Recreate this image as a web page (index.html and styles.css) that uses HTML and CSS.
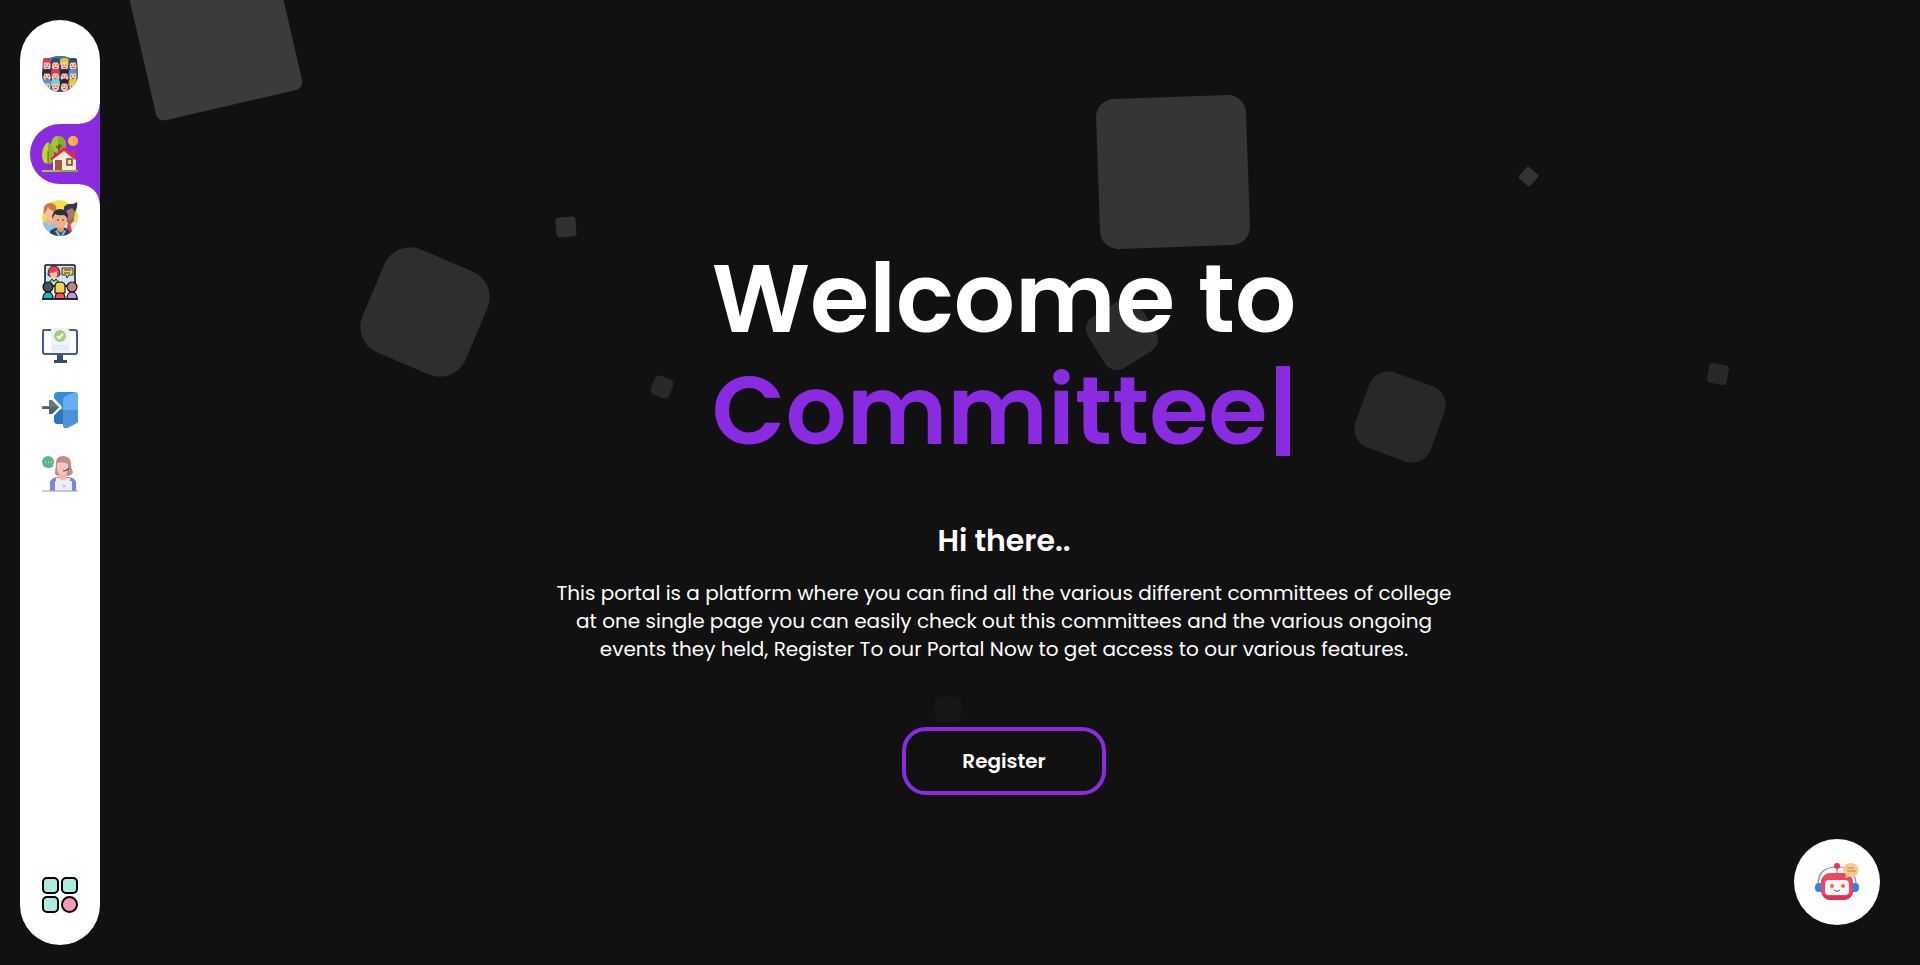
FILE: index.html
```html
<!DOCTYPE html>
<html lang="en">
<head>
<meta charset="utf-8">
<meta name="viewport" content="width=device-width, initial-scale=1">
<title>Committee Portal</title>
<link rel="stylesheet" href="styles.css">
</head>
<body>
<div class="squares" aria-hidden="true">
  <span class="square square-1"></span>
  <span class="square square-2"></span>
  <span class="square square-3"></span>
  <span class="square square-4"></span>
  <span class="square square-5"></span>
  <span class="square square-6"></span>
  <span class="square square-7"></span>
  <span class="square square-8"></span>
  <span class="square square-9"></span>
  <span class="square square-10"></span>
</div>

<nav class="sidebar" aria-label="Main">
  <a class="brand" href="#" aria-label="Committee Portal">
    <svg class="icon" viewBox="0 0 36 36">
      <defs>
        <clipPath id="crowd-clip"><path d="M1 4Q1 2 4 2H8Q18 -2 28 2H32Q35 2 35 4L36 18A18 18 0 0 1 0 18Z"/></clipPath>
        <g id="face">
          <rect x="-1.500" y="8" width="3" height="4" fill="#e59d86"/>
          <rect x="-3.500" y="1" width="7" height="9" rx="3" fill="#f9c4ae"/>
          <path d="M-4.500 5V2a4 4 0 0 1 4-4h1a4 4 0 0 1 4 4v3h-1l-1-2.500h-5l-1 2.500z"/>
          <circle cx="-1.500" cy="5" r=".6" fill="#333"/><circle cx="1.500" cy="5" r=".6" fill="#333"/>
          <path d="M-1.200 7.500h2.400" stroke="#d8384f" stroke-width="1"/>
        </g>
      </defs>
      <g clip-path="url(#crowd-clip)">
        <rect width="36" height="36" fill="#34475e"/>
        <path d="M7 0h22v5H7z" fill="#3f77b8"/>
        <path d="M0 20h36v3H0z" fill="#3a7088"/>
        <use href="#face" x="5" y="4" fill="#e6344f"/><use href="#face" x="13.500" y="4" fill="#324b63"/>
        <use href="#face" x="22.500" y="4" fill="#e9c928"/><use href="#face" x="31" y="4" fill="#344c61"/>
        <use href="#face" x="5" y="15" fill="#292b42"/><use href="#face" x="13.500" y="15" fill="#e6344f"/>
        <use href="#face" x="22.500" y="15" fill="#25283d"/><use href="#face" x="31" y="15" fill="#5b94d2"/>
        <use href="#face" x="5" y="25" fill="#5b94d2"/><use href="#face" x="13.500" y="25" fill="#73cfe0"/>
        <use href="#face" x="22.500" y="25" fill="#25283d"/><use href="#face" x="31" y="25" fill="#e9c928"/>
      </g>
    </svg>
  </a>

  <ul class="menu">
    <li><a class="menu-link active" href="#" aria-label="Home" aria-current="page">
      <svg class="icon" viewBox="0 0 36 36">
        <circle cx="31" cy="5" r="5" fill="#f8b84e"/><path d="M31 0a5 5 0 0 1 0 10z" fill="#f9a743"/>
        <path d="M16 0c5 0 8 4 8 9s-3 8-8 8-7-4-7-8 2-9 7-9z" fill="#a5c63b"/>
        <path d="M16 0c5 0 8 4 8 9s-3 8-8 8z" fill="#86ae2d"/>
        <path d="M17 17V8M17 13l-3-3M17 12l3-3" stroke="#7b4633" stroke-width="1.500" fill="none"/>
        <path d="M6 6c4 3 6 8 6 13s-2 9-6 9-6-4-6-9 2-10 6-13z" fill="#b9d63d"/>
        <path d="M6 6c4 3 6 8 6 13s-2 9-6 9z" fill="#91b62d"/>
        <path d="M6 15v19" stroke="#7b5033"/>
        <path d="M30 14h3v8h-3z" fill="#d92f4b"/>
        <path d="M11 23 22 12l12 11v12H11z" fill="#faebd8"/>
        <path d="m8 23 14-12 13 12-2 1-11-9-12 9z" fill="#e62747"/>
        <path d="M13 24h7v11h-7z" fill="#9c5a42"/>
        <path d="M25 23h5v6h-5z" fill="#f6d7ab" stroke="#76443a" stroke-width="1.500"/>
        <path d="M0 34h12l2 2H0z" fill="#a5c63b"/><path d="M12 34h6v2h-6z" fill="#caa06d"/><path d="M18 34h18v2H18z" fill="#84ac37"/>
      </svg>
    </a></li>
    <li><a class="menu-link" href="#" aria-label="Committees">
      <svg class="icon" viewBox="0 0 36 36">
        <defs><clipPath id="team-clip"><path d="M1 6C8 -2 22 -1 27 4L36 1V18A18 18 0 0 1 0 18Z"/></clipPath></defs>
        <g clip-path="url(#team-clip)">
          <path d="M0 18A18 18 0 0 1 36 18A18 18 0 0 1 0 18Z" fill="#fadd48"/>
          <path d="M0 23q5-4 12-2l5 15H0z" fill="#83c8e8"/>
          <path d="M22 21q8-2 14 2v13H21z" fill="#e4e8ef"/>
          <path d="m26 21 2 2 3 12h-7z" fill="#e94358"/>
          <path d="M5 14h6v9l-3 3-4-4z" fill="#f1b58c"/>
          <ellipse cx="8" cy="13" rx="5" ry="7" fill="#f6c19c"/>
          <path d="M2 14Q0 3 9 3q7 1 5 9-5-1-8-5-1 4-4 7z" fill="#d67242"/>
          <path d="M25 15h7v6l-4 4-4-4z" fill="#956c5c"/>
          <ellipse cx="28" cy="13" rx="5" ry="7" fill="#aa7b69"/>
          <path d="M22 12V7q3-4 9-3l4-2q1 5-2 10l-3-4z" fill="#36384f"/>
          <path d="M8 31q5-4 11-4 6 0 9 5v5H8z" fill="#2d405e"/>
          <path d="M15 24h7v6l-3 3-4-3z" fill="#dd9a72"/>
          <ellipse cx="18" cy="20" rx="7" ry="8" fill="#efb08a"/>
          <path d="M10 19q0-10 8-10 9 0 8 10-2-3-4-4-6 1-9-1z" fill="#292f46"/>
          <path d="m15 30 4 6 3-6 2 1-3 5h-5l-3-5z" fill="#78bfe0"/>
          <circle cx="16" cy="20" r=".7"/><circle cx="21" cy="20" r=".7"/>
        </g>
      </svg>
    </a></li>
    <li><a class="menu-link" href="#" aria-label="Events">
      <svg class="icon" viewBox="0 0 36 36">
        <rect x="3" y="1" width="30" height="21" rx="1" fill="#c7e5f3" stroke="#111" stroke-width="1.500"/>
        <path d="M6 11q0-9 6-9 6 0 6 9l-3 2H9z" fill="#ea3b54" stroke="#111" stroke-width=".8"/>
        <path d="M8 9q4 0 7-2v4q0 4-3 4t-4-4z" fill="#fac5ae"/>
        <path d="m7 18 3-3 2 2 2-2 3 3" fill="#81b969" stroke="#111" stroke-width=".8"/>
        <path d="M20 4h11v7h-4l-2 3-1-3h-4z" fill="#f4cd5d" stroke="#111" stroke-width=".8"/>
        <path d="M22 6h7M22 9h6" stroke="#111" stroke-width=".8"/>
        <path d="M1 35q0-7 5-7t5 7z" fill="#24b3c5" stroke="#111" stroke-width="1.200"/>
        <path d="M13 35q0-7 5-7t5 7z" fill="#ef5250" stroke="#111" stroke-width="1.200"/>
        <path d="M25 35q0-7 5-7t5 7z" fill="#c594df" stroke="#111" stroke-width="1.200"/>
        <circle cx="6" cy="23" r="5" fill="#40565e" stroke="#111" stroke-width="1.200"/>
        <path d="M13 29v-7q0-4 5-4t5 4v7z" fill="#f5ce54" stroke="#111" stroke-width="1.200"/>
        <circle cx="30" cy="23" r="5" fill="#ba8778" stroke="#111" stroke-width="1.200"/>
        <path d="M0 35h36" stroke="#111" stroke-width="1.500"/>
      </svg>
    </a></li>
    <li><a class="menu-link" href="#" aria-label="Registrations">
      <svg class="icon" viewBox="0 0 36 36">
        <path d="M9 2H2q-1 0-1 2v20q0 2 2 2h30q2 0 2-2V4q0-2-2-2h-6" fill="none" stroke="#465c88" stroke-width="2"/>
        <path d="M15 27h6v5h4v3H12v-3h3z" fill="#354b70"/>
        <path d="M9 0h16l3 3v22H9z" fill="#edf2fc"/><path d="M25 0v3h3z" fill="#d6dfef"/>
        <circle cx="18" cy="8" r="6" fill="#a2cf79"/>
        <path d="m15 8 2 2 4-4" fill="none" stroke="#fff" stroke-width="2"/>
        <path d="M10 18h16M10 21h16" stroke="#d6dff3"/>
      </svg>
    </a></li>
    <li><a class="menu-link" href="#" aria-label="Log in">
      <svg class="icon" viewBox="0 0 36 36">
        <path d="M12 4q0-4 4-4h16q4 0 4 4v26l-14 2h-6q-4 0-4-4v-5l8-7-8-8z" fill="#358dd9"/>
        <path d="M12 23l5-5h4v14h-5q-4 0-4-4z" fill="#2b75c2"/>
        <path d="M21 7q0-2 3-3l9-4q3 0 3 4v25q0 2-3 3l-8 4q-4 1-4-3z" fill="#66aef2"/>
        <path d="M21 18h15v11q0 2-3 3l-8 4q-4 1-4-3z" fill="#4a92dc"/>
        <path d="m8 6 3-1 9 10-9 10-3-1z" fill="#fff"/>
        <path d="M0 14h7V8h3l7 7-7 7H7v-5H0z" fill="#5f7c80"/><path d="M0 15h17l-7 7H7v-5H0z" fill="#4d686d"/>
      </svg>
    </a></li>
    <li><a class="menu-link" href="#" aria-label="Support">
      <svg class="icon" viewBox="0 0 36 36">
        <circle cx="6" cy="6" r="6" fill="#58b98c"/><path d="M11 6v5l-6 1z" fill="#58b98c"/>
        <path d="M3 6h1m2 0h1m2 0h1" stroke="#d7fff0" stroke-width="1.200"/>
        <path d="M14 7q0-7 7-7 7 0 8 7 0 6 2 9-1 4-6 4h-8q-5 0-4-5 1-3 1-8z" fill="#bf8d86"/>
        <path d="M8 35V26q1-4 7-5h12q6 1 7 5v9z" fill="#7489d2"/>
        <path d="M17 18h8v4l-4 4-5-4z" fill="#efb6ac"/>
        <path d="M14 22h3q4 4 8 0h3v6H14z" fill="#fae3e3"/>
        <path d="M15 7q6-2 11 1v5q-1 6-5 6-6 0-6-7z" fill="#f5c3bb"/>
        <path d="M21 15q4 0 6-3" stroke="#4d4554" stroke-width="1.200" fill="none"/>
        <rect x="13" y="25" width="17" height="10" rx="1" fill="#eceef8"/>
        <circle cx="22" cy="30" r="1.500" fill="#bdc1da"/>
        <path d="M0 35h36" stroke="#989cac"/>
      </svg>
    </a></li>
  </ul>

  <button class="apps" type="button" aria-label="More">
    <svg class="icon" viewBox="0 0 36 36">
      <g fill="#acebe0" stroke="#000" stroke-width="2">
        <rect x="1" y="1" width="15" height="15" rx="4"/><rect x="20" y="1" width="15" height="15" rx="4"/>
        <rect x="1" y="20" width="15" height="15" rx="4"/><circle cx="27.500" cy="27.500" r="7.500" fill="#fa9ab7"/>
      </g>
    </svg>
  </button>
</nav>

<main class="hero">
  <h1 class="title">Welcome to<br><span class="typed">Committee<span class="cursor" aria-hidden="true"></span></span></h1>
  <h2 class="greeting">Hi there..</h2>
  <p class="intro">This portal is a platform where you can find all the various different committees of college at one single page you can easily check out this committees and the various ongoing events they held, Register To our Portal Now to get access to our various features.</p>
  <a class="register" href="#">Register</a>
</main>

<button class="chat" type="button" aria-label="Open chat">
  <svg class="chat-icon" viewBox="0 0 44 38">
    <path d="M3 22Q3 4 22 4t19 18" fill="none" stroke="#8b8f92" stroke-width="1.200"/>
    <path d="M22 3v8" stroke="#777"/><circle cx="22" cy="3" r="3" fill="#e73555"/>
    <rect x="0" y="20" width="9" height="9" rx="4" fill="#2688ed"/><rect x="35" y="20" width="9" height="9" rx="4" fill="#2688ed"/>
    <rect x="6" y="10" width="32" height="27" rx="9" fill="#f34562"/><path d="M7 30q2 7 9 7h12q8 0 10-8v-2q-3 6-9 6H15q-5 0-8-3z" fill="#dd334f"/>
    <rect x="10" y="17" width="24" height="15" rx="4" fill="#f6f7fa"/>
    <circle cx="17" cy="23" r="2" fill="#ed712d"/><circle cx="28" cy="23" r="2" fill="#ed712d"/>
    <path d="M19 27q3 3 6 0" fill="none" stroke="#555"/>
    <path d="M36 0a7.500 7 0 0 1 0 14h-2l-4 1 1-3q-3-3-3-6 1-6 8-6z" fill="#f9ca83"/>
    <path d="M32 5h7M32 8h9" stroke="#ae855d" stroke-width="1"/>
  </svg>
</button>
</body>
</html>
```
FILE: styles.css
```css
* {
  box-sizing: border-box;
}

body {
  margin: 0;
  min-height: 100vh;
  display: flex;
  overflow: hidden;
  background: #111;
  color: #fff;
  font-family: Poppins, Inter, "Open Sans", sans-serif;
}

/* Floating background squares */
.squares {
  position: absolute;
  inset: 0;
  overflow: hidden;
  z-index: -1;
}

.square {
  position: absolute;
}

.square-1 { left: 139px; top: -43px; width: 150px; height: 150px; border-radius: 8px; background: #3b3b3b; transform: rotate(-13deg); }
.square-2 { left: 369px; top: 256px; width: 112px; height: 112px; border-radius: 28px; background: #2e2e2e; transform: rotate(23deg); }
.square-3 { left: 556px; top: 217px; width: 20px; height: 20px; border-radius: 3px; background: #303030; transform: rotate(-5deg); }
.square-4 { left: 652px; top: 377px; width: 20px; height: 20px; border-radius: 5px; background: #292929; transform: rotate(22deg); }
.square-5 { left: 1098px; top: 97px; width: 150px; height: 150px; border-radius: 18px; background: #353535; transform: rotate(-2deg); }
.square-6 { left: 1092px; top: 304px; width: 60px; height: 60px; border-radius: 14px; background: #2b2b2b; transform: rotate(-32deg); }
.square-7 { left: 1360px; top: 377px; width: 80px; height: 80px; border-radius: 20px; background: #282828; transform: rotate(20deg); }
.square-8 { left: 1521px; top: 169px; width: 15px; height: 15px; border-radius: 2px; background: #333; transform: rotate(42deg); }
.square-9 { left: 1708px; top: 364px; width: 20px; height: 20px; border-radius: 4px; background: #282828; transform: rotate(10deg); }
.square-10 { left: 935px; top: 697px; width: 26px; height: 26px; border-radius: 6px; background: #161616; }

/* Sidebar */
.sidebar {
  display: flex;
  flex-direction: column;
  width: 80px;
  margin: 20px 0 20px 20px;
  padding: 24px 0 20px 10px;
  border-radius: 40px;
  background: #fff;
}

.icon {
  display: block;
  width: 36px;
  height: 36px;
}

.brand,
.menu-link,
.apps {
  display: flex;
  align-items: center;
  height: 60px;
  padding: 0 0 0 12px;
}

.menu {
  display: flex;
  flex-direction: column;
  gap: 4px;
  margin: 20px 0 0;
  padding: 0;
  list-style: none;
}

.menu-link {
  position: relative;
  border-radius: 30px 0 0 30px;
}

.menu-link.active {
  background: #8a2be2;
}

.menu-link.active::before,
.menu-link.active::after {
  content: "";
  position: absolute;
  right: 0;
  width: 20px;
  height: 20px;
}

.menu-link.active::before {
  bottom: 100%;
  background: radial-gradient(circle at 0 0, transparent 19px, #8a2be2 20px);
}

.menu-link.active::after {
  top: 100%;
  background: radial-gradient(circle at 0 100%, transparent 19px, #8a2be2 20px);
}

.apps {
  margin-top: auto;
  border: 0;
  background: none;
  cursor: pointer;
}

/* Hero */
.hero {
  flex: 1;
  display: flex;
  flex-direction: column;
  align-items: center;
  padding: 243px 24px 0 12px;
  text-align: center;
}

.title {
  margin: 0;
  font-size: 96px;
  font-weight: 600;
  line-height: 112px;
  text-align: left;
}

.typed {
  color: #8a2be2;
}

.cursor {
  display: inline-block;
  width: 14px;
  height: 90px;
  margin-left: 8px;
  vertical-align: -12px;
  background: currentColor;
}

.greeting {
  margin: 52px 0 0;
  font-size: 30px;
  font-weight: 600;
  line-height: 44px;
}

.intro {
  max-width: 920px;
  margin: 16px 0 0;
  font-size: 20px;
  font-weight: 400;
  line-height: 28px;
}

.register {
  margin-top: 64px;
  padding: 16px 56px;
  border: 4px solid #8a2be2;
  border-radius: 24px;
  color: #fff;
  font-size: 20px;
  font-weight: 600;
  line-height: 28px;
  text-decoration: none;
}

/* Chat launcher */
.chat {
  position: fixed;
  right: 40px;
  bottom: 40px;
  display: grid;
  place-items: center;
  width: 86px;
  height: 86px;
  padding: 0;
  border: 0;
  border-radius: 50%;
  background: #fff;
  cursor: pointer;
}

.chat-icon {
  display: block;
  width: 44px;
  height: 38px;
}
```
